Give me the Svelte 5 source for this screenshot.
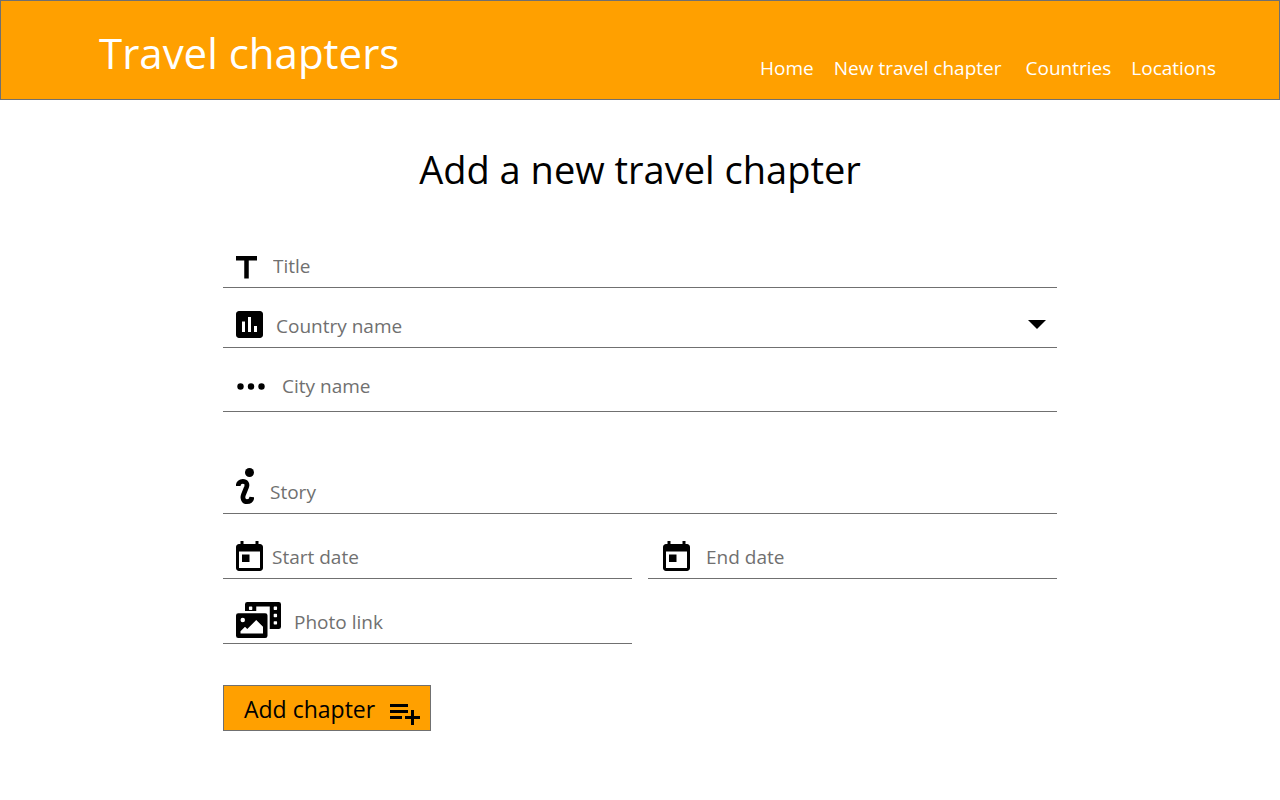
<script>
  const links = [
    { label: 'Home', href: '#home' },
    { label: 'New travel chapter', href: '#new' },
    { label: 'Countries', href: '#countries' },
    { label: 'Locations', href: '#locations' }
  ];

  let title = $state('');
  let country = $state('');
  let city = $state('');
  let story = $state('');
  let start = $state('');
  let end = $state('');
  let photo = $state('');
</script>

{#snippet calendar()}
  <svg width="27" height="32" viewBox="0 0 27 32" aria-hidden="true">
    <path transform="scale(1.5) translate(-3 -1)" d="M19 3h-1V1h-2v2H8V1H6v2H5c-1.11 0-1.99.9-1.99 2L3 19c0 1.1.89 2 2 2h14c1.1 0 2-.9 2-2V5c0-1.1-.9-2-2-2zm0 16H5V8h14v11zM7 10h5v5H7z" />
  </svg>
{/snippet}

<header>
  <p class="brand">Travel chapters</p>
  <nav>
    {#each links as link}
      <a href={link.href}>{link.label}</a>
    {/each}
  </nav>
</header>

<main>
  <h1>Add a new travel chapter</h1>

  <form onsubmit={(e) => e.preventDefault()}>
    <div class="field wide">
      <label for="title" aria-label="Title">
        <svg width="21" height="26" viewBox="0 0 21 26" aria-hidden="true">
          <path transform="scale(1.5) translate(-5 -4)" d="M5 4v3h5.5v12h3V7H19V4z" />
        </svg>
      </label>
      <input id="title" type="text" placeholder="Title" bind:value={title} />
    </div>

    <div class="field">
      <label for="country" aria-label="Country name">
        <svg width="27" height="31" viewBox="0 0 27 31" aria-hidden="true">
          <path transform="scale(1.5) translate(-3 -3)" d="M19 3H5c-1.1 0-2 .9-2 2v14c0 1.1.9 2 2 2h14c1.1 0 2-.9 2-2V5c0-1.1-.9-2-2-2zM9 17H7v-7h2v7zm4 0h-2V7h2v10zm4 0h-2v-4h2v4z" />
        </svg>
      </label>
      <select id="country" bind:value={country}>
        <option value="">Country name</option>
      </select>
      <svg class="arrow" width="18" height="22" viewBox="0 0 18 22" aria-hidden="true">
        <path d="M0 0h18l-9 9z" />
      </svg>
    </div>

    <div class="field wide city">
      <label for="city" aria-label="City name">
        <svg width="30" height="20" viewBox="0 0 30 20" aria-hidden="true">
          <circle cx="4.5" cy="4.5" r="3.2" />
          <circle cx="15" cy="4.5" r="3.2" />
          <circle cx="25.5" cy="4.5" r="3.2" />
        </svg>
      </label>
      <input id="city" type="text" placeholder="City name" bind:value={city} />
    </div>

    <div class="field wide story">
      <label for="story" aria-label="Story">
        <svg width="18" height="40" viewBox="0 0 18 40" aria-hidden="true">
          <circle cx="13.5" cy="4.5" r="4.5" />
          <path d="M2.2 18C2.2 14.8 4.5 13.4 6.8 13.4c3.4 0 4.8 2.6 3.8 5.4L7.5 26.5C5.9 30.8 8 33.7 11 33.7c2.8 0 4.6-1.7 4.9-4.7" fill="none" stroke="#000" stroke-width="4.8" />
        </svg>
      </label>
      <textarea id="story" rows="1" placeholder="Story" bind:value={story}></textarea>
    </div>

    <div class="pair">
      <div class="field tight">
        <label for="start" aria-label="Start date">{@render calendar()}</label>
        <input id="start" type="text" placeholder="Start date" bind:value={start} />
      </div>
      <div class="field wide end">
        <label for="end" aria-label="End date">{@render calendar()}</label>
        <input id="end" type="text" placeholder="End date" bind:value={end} />
      </div>
      <div class="field">
        <label for="photo" aria-label="Photo link">
          <svg width="45" height="36" viewBox="0 0 640 512" aria-hidden="true">
            <path d="M608 0H160a32 32 0 0 0-32 32v96h160V64h192v320h128a32 32 0 0 0 32-32V32a32 32 0 0 0-32-32zM232 103a9 9 0 0 1-9 9h-30a9 9 0 0 1-9-9V73a9 9 0 0 1 9-9h30a9 9 0 0 1 9 9zm352 208a9 9 0 0 1-9 9h-30a9 9 0 0 1-9-9v-30a9 9 0 0 1 9-9h30a9 9 0 0 1 9 9zm0-104a9 9 0 0 1-9 9h-30a9 9 0 0 1-9-9v-30a9 9 0 0 1 9-9h30a9 9 0 0 1 9 9zm0-104a9 9 0 0 1-9 9h-30a9 9 0 0 1-9-9V73a9 9 0 0 1 9-9h30a9 9 0 0 1 9 9zm-168 57H32a32 32 0 0 0-32 32v288a32 32 0 0 0 32 32h384a32 32 0 0 0 32-32V192a32 32 0 0 0-32-32zM96 224a32 32 0 1 1-32 32 32 32 0 0 1 32-32zm288 224H64v-32l64-64 32 32 128-128 96 96z" />
          </svg>
        </label>
        <input id="photo" type="text" placeholder="Photo link" bind:value={photo} />
      </div>
    </div>

    <button type="submit">
      Add chapter
      <svg width="30" height="21" viewBox="2 6 20 14" aria-hidden="true">
        <path d="M14 10H2v2h12v-2zm0-4H2v2h12V6zm4 8v-4h-2v4h-4v2h4v4h2v-4h4v-2h-4zM2 16h8v-2H2v2z" />
      </svg>
    </button>
  </form>
</main>

<style>
  :global(body) {
    margin: 0;
    background: #fff;
    color: #000;
    font-family: 'Segoe UI', 'Open Sans', 'Noto Sans', sans-serif;
  }

  header {
    box-sizing: border-box;
    min-height: 100px;
    padding: 0 63px 0 98px;
    border: 1px solid #707070;
    background: #ffa000;
    color: #fff;
    display: flex;
    justify-content: space-between;
    align-items: flex-end;
  }

  .brand {
    margin: 0;
    padding-bottom: 16px;
    font-size: 42px;
    line-height: 60px;
  }

  nav {
    display: flex;
    gap: 20px;
    padding-bottom: 17px;
    font-size: 19px;
    line-height: 28px;
  }

  nav a {
    color: inherit;
    text-decoration: none;
  }

  nav a:nth-child(3) {
    margin-left: 4px;
  }

  main {
    max-width: 834px;
    margin: 0 auto;
    padding: 39px 16px;
  }

  h1 {
    margin: 0;
    font-size: 38px;
    font-weight: 400;
    line-height: 60px;
    text-align: center;
  }

  form {
    padding-top: 29px;
  }

  .field {
    box-sizing: border-box;
    min-height: 60px;
    padding: 0 11px 5px 13px;
    border-bottom: 1px solid #707070;
    display: flex;
    align-items: flex-end;
    gap: 13px;
  }

  .tight {
    gap: 9px;
  }

  .wide {
    gap: 16px;
  }

  .city {
    min-height: 64px;
    padding-bottom: 9px;
  }

  .story {
    min-height: 102px;
  }

  .pair {
    display: grid;
    grid-template-columns: 1fr 1fr;
    column-gap: 16px;
  }

  .pair .field {
    min-height: 65px;
  }

  .pair .end {
    padding-left: 15px;
  }

  svg {
    display: block;
    flex: none;
    fill: #000;
  }

  input,
  select,
  textarea {
    flex: 1;
    min-width: 0;
    box-sizing: border-box;
    height: 30px;
    margin: 0;
    padding: 0 0 2px;
    border: 0;
    outline: 0;
    background: transparent;
    appearance: none;
    resize: none;
    overflow: hidden;
    color: #707070;
    font: inherit;
    font-size: 19px;
    line-height: 28px;
  }

  ::placeholder {
    color: #707070;
    opacity: 1;
  }

  .arrow {
    pointer-events: none;
  }

  button {
    box-sizing: border-box;
    height: 46px;
    margin-top: 41px;
    padding: 2px 10px 0 20px;
    border: 1px solid #707070;
    background: #ffa000;
    color: #000;
    font: inherit;
    font-size: 23px;
    line-height: 42px;
    display: flex;
    align-items: flex-end;
    gap: 15px;
  }

  button svg {
    margin-bottom: 5px;
  }
</style>
